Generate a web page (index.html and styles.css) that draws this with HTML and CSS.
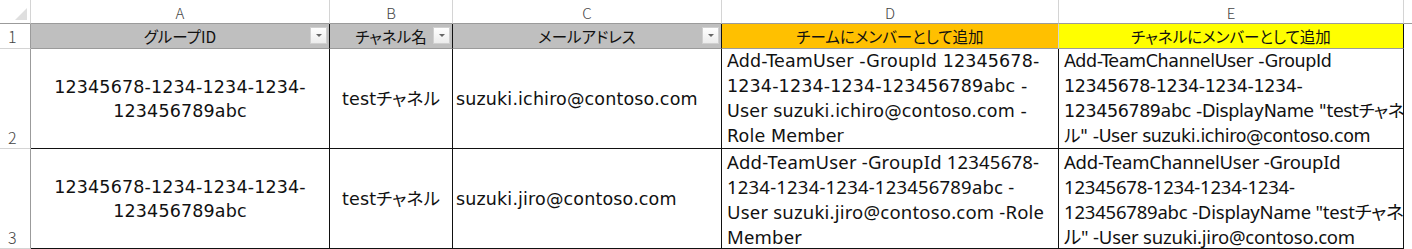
FILE: index.html
```html
<!DOCTYPE html>
<html lang="ja">
<head>
<meta charset="utf-8">
<title>Sheet</title>
<link rel="stylesheet" href="styles.css">
</head>
<body>
<div class="sheet">
  <div class="corner"><span class="corner-tri"></span></div>
  <div class="colhead">A</div>
  <div class="colhead">B</div>
  <div class="colhead">C</div>
  <div class="colhead">D</div>
  <div class="colhead">E</div>
  <div class="colhead colhead-rest"></div>

  <div class="rowhead rowhead-mid">1</div>
  <div class="hcell hgray">グループID<span class="filter"></span></div>
  <div class="hcell hgray">チャネル名<span class="filter"></span></div>
  <div class="hcell hgray">メールアドレス<span class="filter"></span></div>
  <div class="hcell horange">チームにメンバーとして追加</div>
  <div class="hcell hyellow">チャネルにメンバーとして追加</div>
  <div class="rest"></div>

  <div class="rowhead">2</div>
  <div class="cell center">12345678-1234-1234-1234-<br>123456789abc</div>
  <div class="cell center">testチャネル</div>
  <div class="cell left">suzuki.ichiro@contoso.com</div>
  <div class="cell wrap">Add-TeamUser -GroupId 12345678-<br>1234-1234-1234-123456789abc -<br>User suzuki.ichiro@contoso.com -<br>Role Member</div>
  <div class="cell wrap col-e">Add-TeamChannelUser -GroupId<br>12345678-1234-1234-1234-<br>123456789abc -DisplayName "testチャネ<br>ル" -User suzuki.ichiro@contoso.com</div>
  <div class="rest"></div>

  <div class="rowhead">3</div>
  <div class="cell center">12345678-1234-1234-1234-<br>123456789abc</div>
  <div class="cell center">testチャネル</div>
  <div class="cell left">suzuki.jiro@contoso.com</div>
  <div class="cell wrap narrow">Add-TeamUser -GroupId 12345678-<br>1234-1234-1234-123456789abc -<br>User suzuki.jiro@contoso.com -Role<br>Member</div>
  <div class="cell wrap narrow col-e">Add-TeamChannelUser -GroupId<br>12345678-1234-1234-1234-<br>123456789abc -DisplayName "testチャネ<br>ル" -User suzuki.jiro@contoso.com</div>
  <div class="rest"></div>
</div>
</body>
</html>
```

FILE: styles.css
```css
html, body {
  margin: 0;
  padding: 0;
  background: #ffffff;
}

.sheet {
  display: grid;
  grid-template-columns: 31px 299px 123px 269px 337px 345px 1fr;
  grid-template-rows: 24px 25px 100px 100px;
  width: 1412px;
  font-family: "DejaVu Sans", "Noto Sans CJK JP", sans-serif;
  color: #111;
}

.corner {
  position: relative;
  background: #fff;
  border-right: 1px solid #d4d4d4;
  border-bottom: 1px solid #9b9b9b;
  box-sizing: border-box;
}

.corner-tri {
  position: absolute;
  right: 3px;
  bottom: 3px;
  width: 12px;
  height: 12px;
  background: #dfdfdf;
  clip-path: polygon(100% 0, 100% 100%, 0 100%);
}

.colhead {
  display: flex;
  align-items: center;
  justify-content: center;
  box-sizing: border-box;
  border-right: 1px solid #d4d4d4;
  border-bottom: 1px solid #9b9b9b;
  font-family: "Noto Sans CJK JP", sans-serif;
  font-weight: 300;
  font-size: 15px;
  color: #444;
  padding-top: 2px;
}

.colhead-rest {
  border-right: none;
}

.rowhead {
  display: flex;
  align-items: flex-end;
  box-sizing: border-box;
  padding-left: 8px;
  border-right: 1px solid #9b9b9b;
  border-bottom: 1px solid #d4d4d4;
  font-family: "Noto Sans CJK JP", sans-serif;
  font-weight: 300;
  font-size: 16px;
  color: #444;
  line-height: 22px;
}

.rowhead-mid {
  align-items: center;
}

.hcell {
  position: relative;
  display: flex;
  align-items: center;
  justify-content: center;
  box-sizing: border-box;
  border-right: 1px solid #111;
  border-bottom: 1px solid #9b9b9b;
  font-family: "Noto Sans CJK JP", sans-serif;
  font-feature-settings: "palt";
  font-size: 15.5px;
  color: #111;
  white-space: nowrap;
}

.hgray { background: #bfbfbf; }
.horange { background: #ffc000; border-right-color: #d4d4d4; }
.hyellow { background: #ffff00; border-right-color: #111; }

.filter {
  position: absolute;
  right: 2px;
  top: 3px;
  width: 17px;
  height: 17px;
  box-sizing: border-box;
  border: 1px solid #d0d0d0;
  background: linear-gradient(#ffffff, #ececec);
}

.filter::after {
  content: "";
  position: absolute;
  left: 5px;
  top: 6px;
  border-left: 3px solid transparent;
  border-right: 3px solid transparent;
  border-top: 3px solid #666;
}

.cell {
  box-sizing: border-box;
  border-right: 1px solid #111;
  border-bottom: 1px solid #111;
  font-size: 17.5px;
  font-feature-settings: "palt";
  letter-spacing: 0.15px;
  line-height: 24px;
  white-space: nowrap;
  overflow: hidden;
}

.center {
  display: flex;
  align-items: center;
  justify-content: center;
  text-align: center;
}

.left {
  display: flex;
  align-items: center;
  padding-left: 3px;
}

.wrap {
  padding: 0 0 0 5px;
  line-height: 25px;
}

.narrow {
  font-family: "Noto Sans", "Noto Sans CJK JP", sans-serif;
  font-size: 18.5px;
  letter-spacing: 0.2px;
}

.col-e {
  letter-spacing: -0.4px;
}

.narrow.col-e {
  letter-spacing: -0.2px;
}

.rest {
  background: #fff;
}
```
